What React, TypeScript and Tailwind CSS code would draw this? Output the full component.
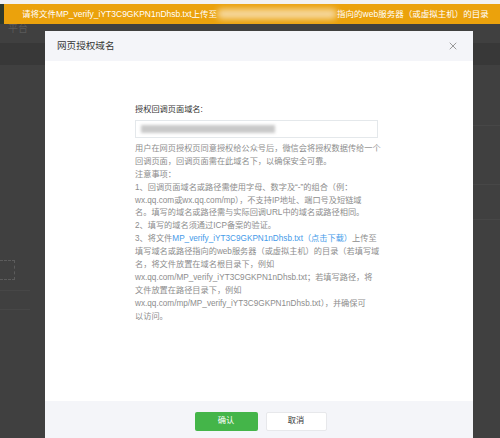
import { X } from 'lucide-react';

const font = { fontFamily: '"Liberation Sans", "Noto Sans CJK SC", sans-serif' };

const Line = ({ children }: { children: React.ReactNode }) => (
  <div className="whitespace-nowrap h-[12.9px] leading-[12.9px]">{children}</div>
);

const App = () => {
  return (
    <div className="relative w-[500px] h-[438px] overflow-hidden bg-[#404040]" style={font}>
      {/* 背后的页面 */}
      <div className="absolute inset-0">
        <div className="h-[4px] bg-[#f2f2f2]" />
        <div className="h-[20px] w-[4px] bg-[#2f3a2c]" />
        <div className="h-[9px] pl-[8px] text-[10px] leading-[9px] text-[#5a5a5a] overflow-hidden">平台</div>
        <div className="mt-[10px] h-[22px] bg-[#383838]" />
        <div className="ml-[473px] border-t border-[#474747] mt-[60px]" />
        <div className="ml-[473px] border-t border-[#474747] mt-[58px]" />
        <div className="ml-[473px] border-t border-[#474747] mt-[34px]" />
        <div className="mt-[40px] w-[15px] h-[20px] border border-dashed border-[#5c5c5c] border-l-0" />
        <div className="w-[30px] border-t border-[#474747] mt-[10px]" />
        <div className="w-[30px] border-t border-[#474747] mt-[18px]" />
      </div>

      <div className="relative">
        <div className="h-[4px]" />
        {/* 顶部提示条 */}
        <div className="ml-[4px] h-[20px] bg-[#eba20c] flex items-center pl-[18px] text-white text-[8.5px] whitespace-nowrap overflow-hidden">
          <span>请将文件MP_verify_iYT3C9GKPN1nDhsb.txt上传至</span>
          <span className="relative w-[120px] h-[12px] shrink-0">
            <span className="absolute inset-x-0 top-[1px] h-[10px] rounded-full bg-[#f6d9a0] blur-[3px]" />
          </span>
          <span>指向的web服务器（或虚拟主机）的目录</span>
        </div>

        {/* 弹窗 */}
        <div className="ml-[45px] mt-[7px] w-[428px] bg-white">
          <div className="h-[30px] bg-[#f4f5f9] flex items-center justify-between pl-[12px] pr-[14px]">
            <span className="text-[9.6px] text-[#353535]">网页授权域名</span>
            <X className="w-[12px] h-[12px] text-[#8f8f8f]" strokeWidth={1.8} />
          </div>
          <div className="h-[340px] pl-[90px] pt-[43px]">
            <div className="text-[8.2px] leading-[12px] text-[#353535]">授权回调页面域名:</div>
            <div className="mt-[4px] w-[243px] h-[18px] border border-[#e4e8eb] flex items-center pl-[5px]">
              <div className="w-[134px] h-[8px] bg-[#c9c9c9] blur-[1.5px]" />
            </div>
            <div className="mt-[5px] text-[8.2px] text-[#8d8d8d]">
              <Line>用户在网页授权页同意授权给公众号后，微信会将授权数据传给一个</Line>
              <Line>回调页面，回调页面需在此域名下，以确保安全可靠。</Line>
              <Line>注意事项：</Line>
              <Line>1、回调页面域名或路径需使用字母、数字及“-”的组合（例：</Line>
              <Line>wx.qq.com或wx.qq.com/mp），不支持IP地址、端口号及短链域</Line>
              <Line>名。填写的域名或路径需与实际回调URL中的域名或路径相同。</Line>
              <Line>2、填写的域名须通过ICP备案的验证。</Line>
              <Line>
                3、将文件<span className="text-[#459ae9]">MP_verify_iYT3C9GKPN1nDhsb.txt（点击下载）</span>上传至
              </Line>
              <Line>填写域名或路径指向的web服务器（或虚拟主机）的目录（若填写域</Line>
              <Line>名，将文件放置在域名根目录下，例如</Line>
              <Line>wx.qq.com/MP_verify_iYT3C9GKPN1nDhsb.txt；若填写路径，将</Line>
              <Line>文件放置在路径目录下，例如</Line>
              <Line>wx.qq.com/mp/MP_verify_iYT3C9GKPN1nDhsb.txt），并确保可</Line>
              <Line>以访问。</Line>
            </div>
          </div>
          <div className="h-[40px] bg-[#f4f5f9] flex justify-center gap-[8px] pt-[11px] pl-[3px]">
            <button className="w-[63px] h-[19px] bg-[#44b549] rounded-[2px] text-white text-[8.2px]">确认</button>
            <button className="w-[61px] h-[19px] bg-white border border-[#e7e8eb] rounded-[2px] text-[#353535] text-[8.2px]">取消</button>
          </div>
        </div>
      </div>
    </div>
  );
};

export default App;
